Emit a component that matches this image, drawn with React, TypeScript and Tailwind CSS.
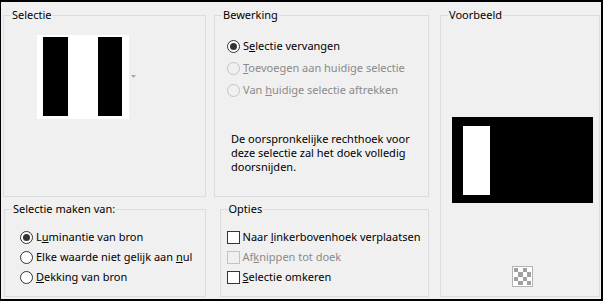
import React from "react";

function Radio({ checked = false, disabled = false }: { checked?: boolean; disabled?: boolean }) {
    return (
        <span
            className={
                "flex h-[13px] w-[13px] shrink-0 items-center justify-center rounded-full border " +
                (disabled ? "border-[#c4c4c4] bg-[#f0f0f0]" : "border-[#333333] bg-white")
            }
        >
            {checked && <span className="h-[7px] w-[7px] rounded-full bg-[#333333]" />}
        </span>
    );
}

function Check({ disabled = false }: { disabled?: boolean }) {
    return (
        <span
            className={
                "block h-[13px] w-[13px] shrink-0 border " +
                (disabled ? "border-[#c4c4c4] bg-[#f0f0f0]" : "border-[#333333] bg-white")
            }
        />
    );
}

function Option({ children, disabled = false, h = "h-[22px]" }: { children: React.ReactNode; disabled?: boolean; h?: string }) {
    return (
        <div className={"flex items-center gap-[3px] whitespace-nowrap " + h + (disabled ? " text-[#8a8a8a]" : " text-black")}>
            {children}
        </div>
    );
}

function Group({ title, className, children }: { title: string; className: string; children?: React.ReactNode }) {
    return (
        <fieldset className={"border border-[#dcdcdc] " + className}>
            <legend className="ml-[7px] px-[1px] leading-[16px] whitespace-nowrap">{title}</legend>
            {children}
        </fieldset>
    );
}

export default function App() {
    return (
        <div
            className="h-[301px] w-[603px] overflow-hidden border-t-2 border-r-2 border-b-2 border-l border-black bg-[#f0f0f0] text-[11px] text-black"
            style={{ fontFamily: '"Noto Sans", "Open Sans", sans-serif' }}
        >
            <div className="flex pt-[5px]">
                <div className="flex w-[428px] flex-col">
                    <div className="flex">
                        <Group title="Selectie" className="ml-[2px] h-[190px] w-[203px]">
                            <div className="flex items-center pt-[12px] pl-[33px]">
                                <div className="flex h-[84px] w-[92px] gap-[30px] bg-white pt-[2px] pl-[6px]">
                                    <div className="h-[79px] w-[25px] bg-black" />
                                    <div className="h-[79px] w-[24px] bg-black" />
                                </div>
                                <svg width="6" height="4" className="ml-[2px]" viewBox="0 0 6 4">
                                    <path d="M0 0 H5 L2.5 3 Z" fill="#a8a8a8" />
                                </svg>
                            </div>
                        </Group>
                        <Group title="Bewerking" className="ml-[8px] h-[190px] w-[215px]">
                            <div className="flex flex-col pt-[12px] pl-[12px]">
                                <Option>
                                    <Radio checked />
                                    <span>S<u>e</u>lectie vervangen</span>
                                </Option>
                                <Option disabled>
                                    <Radio disabled />
                                    <span><u>T</u>oevoegen aan huidige selectie</span>
                                </Option>
                                <Option disabled>
                                    <Radio disabled />
                                    <span>Van <u>h</u>uidige selectie aftrekken</span>
                                </Option>
                                <p className="mt-[31px] ml-[4px] whitespace-nowrap leading-[14px]">
                                    De oorspronkelijke rechthoek voor
                                    <br />
                                    deze selectie zal het doek volledig
                                    <br />
                                    doorsnijden.
                                </p>
                            </div>
                        </Group>
                    </div>
                    <div className="mt-[4px] flex">
                        <Group title="Selectie maken van:" className="ml-[3px] h-[96px] w-[202px]">
                            <div className="flex flex-col pt-[10px] pl-[15px]">
                                <Option h="h-[20px]">
                                    <Radio checked />
                                    <span>L<u>u</u>minantie van bron</span>
                                </Option>
                                <Option h="h-[20px]">
                                    <Radio />
                                    <span>Elke waarde niet gelijk aan <u>n</u>ul</span>
                                </Option>
                                <Option h="h-[20px]">
                                    <Radio />
                                    <span><u>D</u>ekking van bron</span>
                                </Option>
                            </div>
                        </Group>
                        <Group title="Opties" className="ml-[14px] h-[96px] w-[210px]">
                            <div className="flex flex-col pt-[10px] pl-[6px]">
                                <Option h="h-[20px]">
                                    <Check />
                                    <span>Naar <u>l</u>inkerbovenhoek verplaatsen</span>
                                </Option>
                                <Option h="h-[20px]" disabled>
                                    <Check disabled />
                                    <span>Af<u>k</u>nippen tot doek</span>
                                </Option>
                                <Option h="h-[20px]">
                                    <Check />
                                    <span><u>S</u>electie omkeren</span>
                                </Option>
                            </div>
                        </Group>
                    </div>
                </div>
                <Group title="Voorbeeld" className="ml-[11px] h-[290px] w-[160px]">
                    <div className="flex flex-col">
                        <div className="mt-[94px] ml-[11px] h-[86px] w-[141px] bg-black pt-[9px] pl-[11px]">
                            <div className="h-[69px] w-[27px] bg-white" />
                        </div>
                        <div className="mt-[63px] ml-[71px] grid h-[21px] w-[21px] grid-cols-4 border border-[#b4b4b4] bg-white p-[1px]">
                            {Array.from({ length: 16 }).map((_, i) => (
                                <span
                                    key={i}
                                    className={(Math.floor(i / 4) + (i % 4)) % 2 === 0 ? "bg-[#a0a0a0]" : "bg-white"}
                                />
                            ))}
                        </div>
                    </div>
                </Group>
            </div>
        </div>
    );
}
